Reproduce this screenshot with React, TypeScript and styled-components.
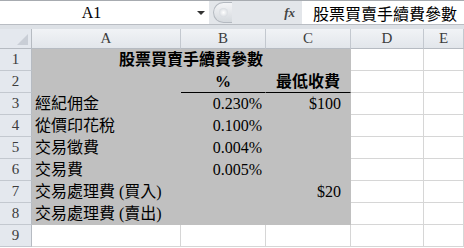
import styled, { createGlobalStyle } from 'styled-components';

const GlobalStyle = createGlobalStyle`
    html, body {
        margin: 0;
        padding: 0;
        background: #ffffff;
        overflow: hidden;
    }
`;

const cellFont = `"Liberation Serif", "Noto Sans CJK TC", serif`;

type Align = 'left' | 'center' | 'right';

interface CellProps {
    $fill?: boolean;
    $align?: Align;
    $bold?: boolean;
    $underline?: boolean;
    $span?: number;
    $padRight?: number;
}

const StyledWindow = styled.div`
    width: 464px;
    height: 248px;
    overflow: hidden;
    background: #ffffff;
    display: flex;
    flex-direction: column;
`;

const StyledFormulaBar = styled.div`
    height: 23px;
    border-top: 1px solid #a7abb0;
    border-bottom: 1px solid #b9bdc3;
    display: flex;
    align-items: stretch;
    background: #e3e6ea;
`;

const StyledNameBox = styled.div`
    width: 209px;
    background: #ffffff;
    display: flex;
    align-items: center;
    font-family: ${cellFont};
    font-size: 16px;
    color: #000;
`;

const StyledNameText = styled.span`
    flex: 1;
    text-align: center;
    padding-right: 14px;
`;

const StyledDropArrow = styled.span`
    width: 0;
    height: 0;
    border-left: 4px solid transparent;
    border-right: 4px solid transparent;
    border-top: 4px solid #333;
    margin-right: 4px;
`;

const StyledGrip = styled.div`
    width: 18px;
    margin-left: 4px;
    margin-top: 1px;
    margin-bottom: 1px;
    border-radius: 11px 0 0 11px;
    background: linear-gradient(#f4f5f7, #d5d9de);
    border: 1px solid #b4b9c0;
    border-right: none;
    display: flex;
    align-items: center;
    justify-content: center;
`;

const StyledGripDot = styled.span`
    width: 9px;
    height: 9px;
    border-radius: 50%;
    background: radial-gradient(#ffffff, #c9ced5);
`;

const StyledFxArea = styled.div`
    width: 70px;
    display: flex;
    align-items: center;
    justify-content: flex-end;
    padding-right: 7px;
    box-sizing: border-box;
    font-family: "Liberation Serif", serif;
    font-style: italic;
    font-weight: bold;
    font-size: 13px;
    color: #444;
`;

const StyledFormulaInput = styled.div`
    flex: 1;
    min-width: 0;
    background: #ffffff;
    display: flex;
    align-items: center;
    padding-left: 11px;
    white-space: nowrap;
    overflow: hidden;
    font-family: ${cellFont};
    font-size: 16px;
    color: #000;
`;

const StyledGap = styled.div`
    height: 4px;
    background: #dde1e6;
`;

const StyledSheet = styled.div`
    display: grid;
    grid-template-columns: 32px 149px 85px 85px 73px 1fr;
    grid-template-rows: 20px repeat(9, 22px);
`;

const StyledCorner = styled.div`
    background: #e4e8ee;
    border-right: 1px solid #b6bbc2;
    border-bottom: 1px solid #b6bbc2;
    position: relative;
    &::after {
        content: '';
        position: absolute;
        right: 3px;
        bottom: 3px;
        width: 0;
        height: 0;
        border-left: 11px solid transparent;
        border-bottom: 11px solid #c9ced6;
    }
`;

const StyledColHeader = styled.div`
    background: linear-gradient(#f1f3f6, #e2e6eb);
    border-right: 1px solid #c3c8cf;
    border-bottom: 1px solid #b6bbc2;
    display: flex;
    align-items: center;
    justify-content: center;
    font-family: ${cellFont};
    font-size: 15px;
    color: #3c3c3c;
`;

const StyledRowHeader = styled.div`
    background: #e4e8ee;
    border-right: 1px solid #b6bbc2;
    border-bottom: 1px solid #c3c8cf;
    display: flex;
    align-items: center;
    justify-content: center;
    font-family: ${cellFont};
    font-size: 15px;
    color: #3c3c3c;
`;

const StyledCell = styled.div<CellProps>`
    grid-column: span ${p => p.$span ?? 1};
    background: ${p => (p.$fill ? '#c0c0c0' : '#ffffff')};
    border-right: 1px solid ${p => (p.$fill ? '#c0c0c0' : '#d6d6d6')};
    border-bottom: 1px solid ${p => (p.$underline ? '#000000' : p.$fill ? '#c0c0c0' : '#d6d6d6')};
    display: flex;
    align-items: flex-end;
    justify-content: ${p => (p.$align === 'right' ? 'flex-end' : p.$align === 'center' ? 'center' : 'flex-start')};
    padding: 0 ${p => p.$padRight ?? 3}px 1px 3px;
    box-sizing: border-box;
    white-space: nowrap;
    font-family: ${cellFont};
    font-size: 16px;
    font-weight: ${p => (p.$bold ? 'bold' : 'normal')};
    line-height: 18px;
    color: #000;
`;

const columns = ['A', 'B', 'C', 'D', 'E'];

interface RowData {
    label: string;
    pct?: string;
    min?: string;
}

const rows: RowData[] = [
    { label: '經紀佣金', pct: '0.230%', min: '$100' },
    { label: '從價印花稅', pct: '0.100%' },
    { label: '交易徵費', pct: '0.004%' },
    { label: '交易費', pct: '0.005%' },
    { label: '交易處理費 (買入)', min: '$20' },
    { label: '交易處理費 (賣出)' },
];

// D and E stay empty on every row
const BlankCells = () => (
    <>
        <StyledCell />
        <StyledCell />
    </>
);

const Row = ({ index, data }: { index: number; data: RowData }) => (
    <>
        <StyledRowHeader>{index}</StyledRowHeader>
        <StyledCell $fill>{data.label}</StyledCell>
        <StyledCell $fill $align='right'>{data.pct}</StyledCell>
        <StyledCell $fill $align='right' $padRight={9}>{data.min}</StyledCell>
        <BlankCells />
    </>
);

const App = () => {
    return (
        <StyledWindow>
            <GlobalStyle />
            <StyledFormulaBar>
                <StyledNameBox>
                    <StyledNameText>A1</StyledNameText>
                    <StyledDropArrow />
                </StyledNameBox>
                <StyledGrip>
                    <StyledGripDot />
                </StyledGrip>
                <StyledFxArea>fx</StyledFxArea>
                <StyledFormulaInput>股票買賣手續費參數</StyledFormulaInput>
            </StyledFormulaBar>
            <StyledGap />
            <StyledSheet>
                <StyledCorner />
                {columns.map(c => (
                    <StyledColHeader key={c}>{c}</StyledColHeader>
                ))}

                <StyledRowHeader>1</StyledRowHeader>
                <StyledCell $fill $bold $align='center' $span={3}>股票買賣手續費參數</StyledCell>
                <BlankCells />

                <StyledRowHeader>2</StyledRowHeader>
                <StyledCell $fill />
                <StyledCell $fill $bold $underline $align='center'>%</StyledCell>
                <StyledCell $fill $bold $underline $align='center'>最低收費</StyledCell>
                <BlankCells />

                {rows.map((r, i) => (
                    <Row key={r.label} index={i + 3} data={r} />
                ))}

                <StyledRowHeader>9</StyledRowHeader>
                <StyledCell />
                <StyledCell />
                <StyledCell />
                <BlankCells />
            </StyledSheet>
        </StyledWindow>
    );
};

export default App;
